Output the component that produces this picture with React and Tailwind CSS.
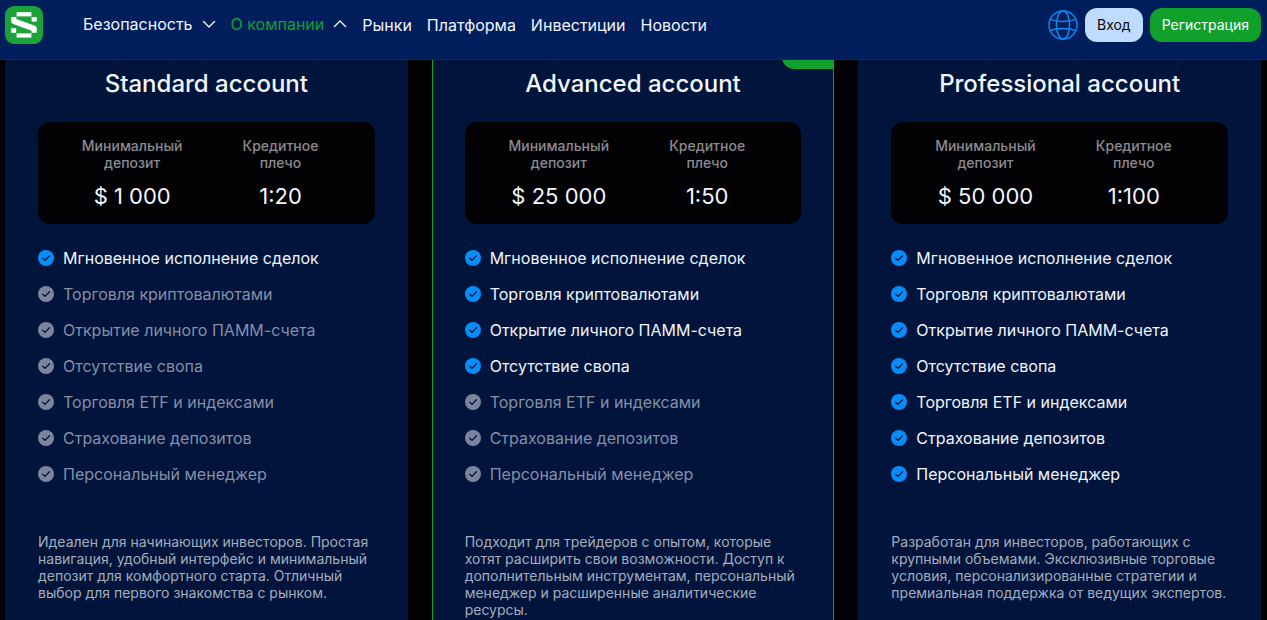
import React from 'react';

const FEATURES = [
  'Мгновенное исполнение сделок',
  'Торговля криптовалютами',
  'Открытие личного ПАММ-счета',
  'Отсутствие свопа',
  'Торговля ETF и индексами',
  'Страхование депозитов',
  'Персональный менеджер',
];

const ACCOUNTS = [
  {
    name: 'Standard account',
    deposit: '$ 1 000',
    leverage: '1:20',
    active: 1,
    text: 'Идеален для начинающих инвесторов. Простая навигация, удобный интерфейс и минимальный депозит для комфортного старта. Отличный выбор для первого знакомства с рынком.',
  },
  {
    name: 'Advanced account',
    deposit: '$ 25 000',
    leverage: '1:50',
    active: 4,
    featured: true,
    text: 'Подходит для трейдеров с опытом, которые хотят расширить свои возможности. Доступ к дополнительным инструментам, персональный менеджер и расширенные аналитические ресурсы.',
  },
  {
    name: 'Professional account',
    deposit: '$ 50 000',
    leverage: '1:100',
    active: 7,
    text: 'Разработан для инвесторов, работающих с крупными объемами. Эксклюзивные торговые условия, персонализированные стратегии и премиальная поддержка от ведущих экспертов.',
  },
];

function Logo() {
  return (
    <svg width="38" height="38" viewBox="0 0 38 38" aria-hidden="true">
      <rect width="38" height="38" rx="9" fill="#1ba238" />
      <g fill="#fff">
        <rect x="11.6" y="6.2" width="14.8" height="4.2" />
        <rect x="26.6" y="11" width="5.2" height="4.6" />
        <rect x="6.2" y="22.2" width="5" height="4.6" />
        <rect x="11.6" y="27.4" width="14.8" height="4.2" />
        <path d="M6.2 11H11.4V13L29.8 19.8Q31.8 20.6 31.8 22.6V26.8H26.6V24.8L8.2 18Q6.2 17.2 6.2 15.2Z" />
      </g>
    </svg>
  );
}

function Chevron({ up }) {
  return (
    <svg width="14" height="14" viewBox="0 0 14 14" fill="none" stroke="#fff" strokeWidth="1.3" strokeLinecap="round" strokeLinejoin="round" aria-hidden="true">
      <path d={up ? 'M1.5 9.5L7 4L12.5 9.5' : 'M1.5 4.5L7 10L12.5 4.5'} />
    </svg>
  );
}

function Globe() {
  return (
    <svg width="30" height="30" viewBox="0 0 30 30" fill="none" stroke="#0a8cf5" strokeWidth="1.4" aria-hidden="true">
      <circle cx="15" cy="15" r="14" />
      <ellipse cx="15" cy="15" rx="6.6" ry="14" />
      <path d="M2.2 9.4C9 12.2 21 12.2 27.8 9.4" />
      <path d="M2.2 20.6C9 17.8 21 17.8 27.8 20.6" />
    </svg>
  );
}

function Check({ active }) {
  return (
    <svg className="shrink-0" width="16" height="16" viewBox="0 0 16 16" aria-hidden="true">
      <circle cx="8" cy="8" r="8" fill={active ? '#058dfa' : '#7a859d'} />
      <path d="M4.7 8.2L7 10.4L11.5 5.8" fill="none" stroke="#00143c" strokeWidth="1.3" strokeLinecap="round" strokeLinejoin="round" />
    </svg>
  );
}

function Header() {
  return (
    <header className="relative z-10 h-[60px] shrink-0 border-b border-[#032a80] bg-[#001e5c]">
      <div className="flex h-[50px] items-center pr-[6px] pl-[5px]">
        <a href="#home" aria-label="Главная"><Logo /></a>
        <nav className="ml-10 flex items-center gap-[15px] text-base leading-5">
          <button type="button" className="flex items-center gap-[9px] pb-[2px]">
            Безопасность
            <Chevron />
          </button>
          <button type="button" className="flex items-center gap-[9px] pb-[2px] text-[#12a12d]">
            О компании
            <Chevron up />
          </button>
          <a href="#markets">Рынки</a>
          <a href="#platform">Платформа</a>
          <a href="#investments">Инвестиции</a>
          <a href="#news">Новости</a>
        </nav>
        <div className="ml-auto flex items-center gap-[7px] text-sm">
          <button type="button" aria-label="Язык"><Globe /></button>
          <a href="#login" className="flex h-[34px] items-center rounded-xl bg-[#bfdbfe] px-3 text-[#0a0a0a]">Вход</a>
          <a href="#register" className="flex h-[34px] items-center rounded-xl bg-[#10a12c] px-3 text-white">Регистрация</a>
        </div>
      </div>
    </header>
  );
}

function Stat({ label, value }) {
  return (
    <div className="flex flex-col items-center gap-3 text-center">
      <dt className="w-[102px] text-sm leading-[17px] font-medium text-[#8c8b90]">{label}</dt>
      <dd className="text-[22px] leading-[26px] whitespace-nowrap">{value}</dd>
    </div>
  );
}

function AccountCard({ account }) {
  return (
    <article className={account.featured ? 'relative border-x border-[#10a12c] bg-[#00143c] px-8 pt-[9px]' : 'relative border-x border-transparent bg-[#00143c] px-8 pt-[9px]'}>
      {account.featured && <span className="absolute -top-3 -right-px h-[21px] w-[52px] rounded-bl-xl bg-[#10a12c]" />}
      <h2 className="text-center text-2xl leading-[29px] font-medium">{account.name}</h2>
      <dl className="mt-6 grid grid-cols-2 rounded-xl bg-[#020104] px-5 py-[15px]">
        <Stat label="Минимальный депозит" value={account.deposit} />
        <Stat label="Кредитное плечо" value={account.leverage} />
      </dl>
      <ul className="mt-6 flex flex-col gap-4">
        {FEATURES.map((feature, i) => (
          <li key={feature} className={i < account.active ? 'flex items-center gap-[9px] leading-5' : 'flex items-center gap-[9px] leading-5 text-[#858fa6]'}>
            <Check active={i < account.active} />
            {feature}
          </li>
        ))}
      </ul>
      <p className="mt-[49px] text-sm leading-[17px] text-[#a5adbd]">{account.text}</p>
    </article>
  );
}

export default function App() {
  return (
    <div className="flex h-screen flex-col overflow-hidden bg-[#020104] font-[Inter,sans-serif] text-[#f1f5fd]">
      <Header />
      <main className="grid w-full flex-1 grid-cols-3 gap-6 overflow-hidden pr-[6px] pl-[5px]">
        {ACCOUNTS.map((account) => (
          <AccountCard key={account.name} account={account} />
        ))}
      </main>
    </div>
  );
}
